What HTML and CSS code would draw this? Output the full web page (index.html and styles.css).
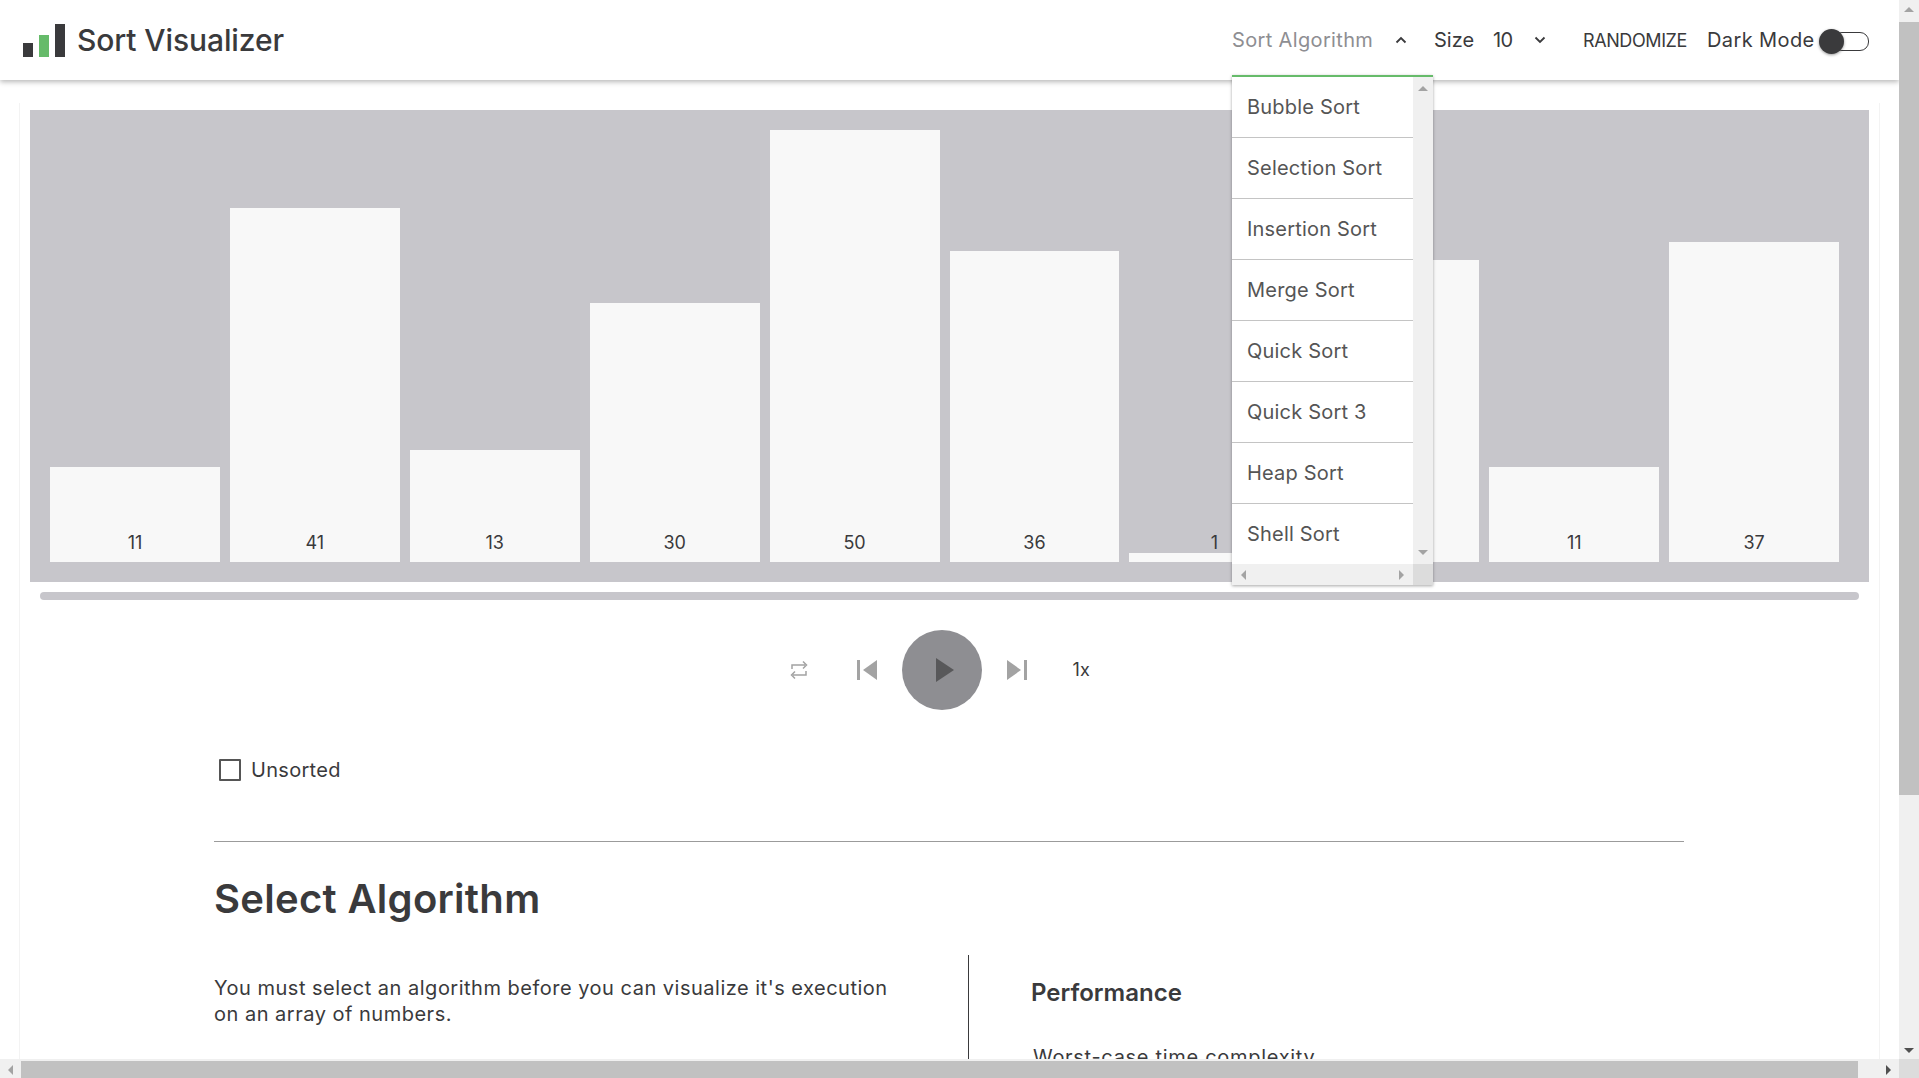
FILE: index.html
```html
<!DOCTYPE html>
<html lang="en">
<head>
<meta charset="utf-8">
<title>Sort Visualizer</title>
<link rel="stylesheet" href="styles.css">
</head>
<body>
<div class="window">
  <div class="page">
    <header class="navbar">
      <div class="brand">
        <svg class="logo" width="42" height="33" viewBox="0 0 42 33"><rect x="0" y="19" width="10" height="14" fill="#3a3a3c"/><rect x="16" y="11" width="10" height="22" fill="#66bb6a"/><rect x="32" y="0" width="10" height="33" fill="#3a3a3c"/></svg>
        <span class="title">Sort Visualizer</span>
      </div>
      <nav class="nav">
        <div class="nav-algo">
          <span class="muted">Sort Algorithm</span>
          <svg class="chev" width="12" height="8" viewBox="0 0 12 8"><path d="M1.5 6.5 6 2l4.500 4.500" fill="none" stroke="#3a3a3c" stroke-width="1.800"/></svg>
          <div class="dropdown">
            <div class="dd-body">
              <ul class="dd-list">
                <li>Bubble Sort</li>
                <li>Selection Sort</li>
                <li>Insertion Sort</li>
                <li>Merge Sort</li>
                <li>Quick Sort</li>
                <li>Quick Sort 3</li>
                <li>Heap Sort</li>
                <li class="last">Shell Sort</li>
              </ul>
              <div class="sb-v sb-small">
                <i class="arrow up dim"></i><i class="arrow down dim"></i>
              </div>
            </div>
            <div class="dd-foot">
              <div class="sb-h sb-small"><i class="arrow left dim"></i><i class="arrow right dim"></i></div>
              <div class="corner"></div>
            </div>
          </div>
        </div>
        <div class="nav-size">
          <span>Size</span><span class="size-val">10</span>
          <svg class="chev" width="12" height="8" viewBox="0 0 12 8"><path d="M1.500 1.500 6 6l4.500-4.500" fill="none" stroke="#3a3a3c" stroke-width="1.800"/></svg>
        </div>
        <div class="nav-rand">RANDOMIZE</div>
        <div class="nav-dark">Dark Mode</div>
        <div class="switch"><span class="knob"></span></div>
      </nav>
    </header>

    <main class="panel">
      <div class="canvas">
        <div class="bar" style="height:95px"><span>11</span></div>
        <div class="bar" style="height:354px"><span>41</span></div>
        <div class="bar" style="height:112px"><span>13</span></div>
        <div class="bar" style="height:259px"><span>30</span></div>
        <div class="bar" style="height:432px"><span>50</span></div>
        <div class="bar" style="height:311px"><span>36</span></div>
        <div class="bar" style="height:9px"><span>1</span></div>
        <div class="bar" style="height:302px"><span>35</span></div>
        <div class="bar" style="height:95px"><span>11</span></div>
        <div class="bar" style="height:320px"><span>37</span></div>
      </div>
      <div class="slider"></div>
      <div class="controls">
        <svg class="c-repeat" width="22" height="20" viewBox="0 0 22 20"><path d="M4 9V5h13M15 1.500 18.500 5 15 8.500M18 11v4H5M7 11.500 3.500 15 7 18.500" fill="none" stroke="#a3a3a3" stroke-width="1.500"/></svg>
        <svg class="c-prev" width="20" height="20" viewBox="0 0 20 20"><rect width="3" height="20" fill="#a3a3a3"/><path d="M20 0v20L6 10z" fill="#a3a3a3"/></svg>
        <button class="play" type="button" aria-label="Play"><svg width="18" height="24" viewBox="0 0 18 24"><path d="M0 0l18 12L0 24z" fill="#58585a"/></svg></button>
        <svg class="c-next" width="20" height="20" viewBox="0 0 20 20"><path d="M0 0v20l14-10z" fill="#a3a3a3"/><rect x="17" width="3" height="20" fill="#a3a3a3"/></svg>
        <span class="speed">1x</span>
      </div>
      <section class="info">
        <label class="check"><span class="box"></span><span>Unsorted</span></label>
        <hr class="rule">
        <h1 class="heading">Select Algorithm</h1>
        <div class="columns">
          <div class="col-left">
            <p class="desc">You must select an algorithm before you can visualize it's execution on an array of numbers.</p>
          </div>
          <div class="col-right">
            <h2 class="perf">Performance</h2>
            <p class="worst">Worst-case time complexity</p>
          </div>
        </div>
      </section>
    </main>
  </div>
  <div class="sb-v page-v">
    <i class="arrow up dim"></i>
    <div class="thumb-v"></div>
    <i class="arrow down"></i>
  </div>
  <div class="sb-h page-h">
    <i class="arrow left dim"></i>
    <div class="thumb-h"></div>
    <i class="arrow right"></i>
  </div>
  <div class="corner"></div>
</div>
</body>
</html>
```

FILE: styles.css
```css
* { box-sizing: border-box; }
html, body { margin: 0; height: 100%; overflow: hidden; }
body { font-family: Inter, "Noto Sans", sans-serif; font-size: 20px; color: #3a3a3c; background: #fff; }

.window { display: grid; grid-template-columns: 1fr 20px; grid-template-rows: 1fr 19px; width: 100vw; height: 100vh; }
.page { overflow: hidden; min-width: 0; min-height: 0; }

.navbar { position: relative; z-index: 2; display: flex; justify-content: space-between; align-items: center; height: 80px; padding: 0 30px 0 23px; background: #fff; box-shadow: 0 2px 5px rgba(0,0,0,.28); }
.brand { display: flex; align-items: center; gap: 12px; }
.title { font-size: 30px; font-weight: 500; letter-spacing: -.1px; }
.nav { display: flex; align-items: center; height: 100%; }
.nav-algo { position: relative; display: flex; align-items: center; justify-content: space-between; width: 202px; padding-right: 27px; }
.muted { color: #8e8e92; letter-spacing: .35px; }
.nav-size { display: flex; align-items: center; width: 149px; }
.size-val { margin-left: 19px; width: 41px; letter-spacing: -.8px; }
.nav-rand { width: 124px; font-size: 18px; letter-spacing: -.4px; }
.nav-dark { width: 112px; letter-spacing: .4px; }
.switch { position: relative; width: 50px; height: 17px; padding-left: 14px; }
.switch::before { content: ""; display: block; height: 17px; border: 1px solid #3a3a3c; border-radius: 9px; background: #fff; }
.knob { position: absolute; left: 0; top: -3px; width: 25px; height: 25px; border-radius: 50%; background: #3a3a3c; box-shadow: 0 1px 3px rgba(0,0,0,.4); }

.dropdown { position: absolute; left: 0; top: 47px; width: 201px; height: 510px; border-top: 2px solid #66bb6a; background: #fff; box-shadow: 0 1px 3px rgba(0,0,0,.35); display: flex; flex-direction: column; }
.dd-body { display: flex; flex: 1; min-height: 0; }
.dd-list { flex: 1; margin: 0; padding: 0; list-style: none; overflow: hidden; color: #555; letter-spacing: .2px; }
.dd-list li { height: 61px; padding-left: 15px; line-height: 60px; border-bottom: 1px solid #c4c4c4; }
.dd-list li.last { border-bottom: 0; }
.dd-foot { display: flex; height: 21px; }
.dd-foot .sb-h { flex: 1; }

.sb-v { display: flex; flex-direction: column; align-items: center; justify-content: space-between; width: 20px; background: #f0f0f0; }
.sb-h { display: flex; align-items: center; justify-content: space-between; background: #f0f0f0; }
.corner { width: 20px; background: #dcdcdc; }
.arrow { display: block; width: 0; height: 0; border-style: solid; border-color: transparent; flex: none; }
.arrow.up { border-width: 0 5px 5px; border-bottom-color: #505050; }
.arrow.down { border-width: 5px 5px 0; border-top-color: #505050; }
.arrow.left { border-width: 5px 5px 5px 0; border-right-color: #505050; }
.arrow.right { border-width: 5px 0 5px 5px; border-left-color: #505050; }
.arrow.up.dim { border-bottom-color: #a3a3a3; }
.arrow.down.dim { border-top-color: #a3a3a3; }
.arrow.left.dim { border-right-color: #a3a3a3; }
.arrow.right.dim { border-left-color: #a3a3a3; }
.dropdown .sb-v { padding: 9px 0; }
.dd-foot .sb-h { padding: 0 9px; }

.page-v { padding: 7px 0 6px; }
.thumb-v { flex: none; width: 100%; height: 773px; margin-top: 10px; margin-bottom: auto; background: #c1c1c1; }
.page-h { padding: 0 8px; border-top: 2px solid #f0f0f0; }
.thumb-h { flex: none; width: 1837px; height: 100%; margin-left: 8px; margin-right: auto; background: #c1c1c1; }

.panel { margin: 23px 19px 0; padding: 7px 10px 0; border-left: 1px solid #f3f3f3; border-right: 1px solid #f3f3f3; }
.canvas { display: flex; align-items: flex-end; gap: 10px; height: 472px; padding: 0 30px 20px 20px; background: #c7c6cb; }
.bar { flex: 1 1 0; min-width: 0; display: flex; flex-direction: column; justify-content: flex-end; align-items: center; background: #f8f8f8; }
.bar span { margin-bottom: 7px; font-size: 18px; line-height: 24px; }
.slider { height: 8px; margin: 10px 10px 0; border-radius: 4px; background: #c7c6cb; }

.controls { display: flex; align-items: center; justify-content: center; margin-top: 30px; padding-right: 16px; }
.c-prev { margin-left: 47px; }
.play { display: flex; align-items: center; justify-content: center; width: 80px; height: 80px; margin-left: 25px; padding: 0 0 0 6px; border: 0; border-radius: 50%; background: #8e8e92; }
.c-next { margin-left: 25px; }
.speed { width: 23px; margin: 0 0 2px 46px; font-size: 18px; letter-spacing: .2px; }

.info { padding: 0 185px 0 184px; }
.check { display: flex; align-items: center; gap: 10px; margin-top: 49px; padding-left: 5px; height: 22px; letter-spacing: .3px; }
.box { width: 22px; height: 22px; border: 2px solid #555; border-radius: 1px; }
.rule { margin: 60px 0 0; border: 0; border-top: 1px solid #9b9b9b; }
.heading { margin: 27px 0 0; font-size: 40px; font-weight: 600; line-height: 60px; letter-spacing: .3px; }
.columns { display: flex; margin-top: 26px; }
.col-left { width: 755px; padding-top: 20px; border-right: 1px solid #3a3a3c; }
.desc { width: 690px; margin: 0; line-height: 26px; letter-spacing: .5px; }
.col-right { padding: 20px 0 0 62px; }
.perf { margin: 0; font-size: 24px; font-weight: 600; line-height: 36px; }
.worst { margin: 31px 0 0 2px; line-height: 30px; letter-spacing: .7px; }
```
